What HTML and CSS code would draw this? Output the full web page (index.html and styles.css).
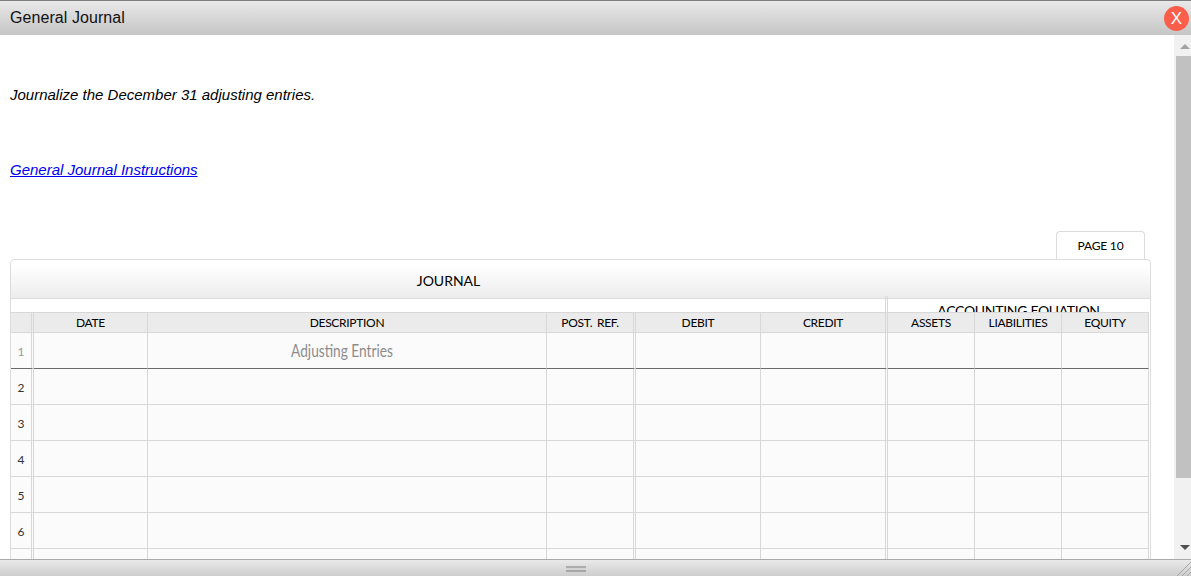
FILE: index.html
```html
<!DOCTYPE html>
<html lang="en">
<head>
    <meta charset="UTF-8">
    <title>General Journal</title>
    <link rel="stylesheet" href="styles.css">
</head>
<body>
    <div class="dialog">
        <div class="titlebar">
            <span class="title">General Journal</span>
            <span class="close">X</span>
        </div>

        <div class="middle">
            <div class="content">
                <p class="intro">Journalize the December 31 adjusting entries.</p>
                <p class="instructions"><a href="#">General Journal Instructions</a></p>

                <div class="page-row">
                    <div class="page-tab">PAGE 10</div>
                </div>

                <div class="panel">
                    <div class="panel-head">
                        <div class="panel-title">JOURNAL</div>
                    </div>
                    <div class="band">
                        <div class="equation">ACCOUNTING EQUATION</div>
                    </div>
                    <table class="journal">
                        <colgroup>
                            <col class="c-num">
                            <col class="c-date">
                            <col class="c-desc">
                            <col class="c-ref">
                            <col class="c-debit">
                            <col class="c-credit">
                            <col class="c-acct">
                            <col class="c-acct">
                            <col class="c-acct">
                        </colgroup>
                        <thead>
                            <tr>
                                <th class="dbl"></th>
                                <th>DATE</th>
                                <th>DESCRIPTION</th>
                                <th class="dbl">POST. REF.</th>
                                <th>DEBIT</th>
                                <th class="dbl">CREDIT</th>
                                <th>ASSETS</th>
                                <th>LIABILITIES</th>
                                <th>EQUITY</th>
                            </tr>
                        </thead>
                        <tbody>
                            <tr class="heading-row">
                                <td class="dbl num num-first">1</td>
                                <td></td>
                                <td class="entry"><span class="entry-text">Adjusting Entries</span></td>
                                <td class="dbl"></td>
                                <td></td>
                                <td class="dbl"></td>
                                <td></td>
                                <td></td>
                                <td></td>
                            </tr>
                            <tr><td class="dbl num">2</td><td></td><td></td><td class="dbl"></td><td></td><td class="dbl"></td><td></td><td></td><td></td></tr>
                            <tr><td class="dbl num">3</td><td></td><td></td><td class="dbl"></td><td></td><td class="dbl"></td><td></td><td></td><td></td></tr>
                            <tr><td class="dbl num">4</td><td></td><td></td><td class="dbl"></td><td></td><td class="dbl"></td><td></td><td></td><td></td></tr>
                            <tr><td class="dbl num">5</td><td></td><td></td><td class="dbl"></td><td></td><td class="dbl"></td><td></td><td></td><td></td></tr>
                            <tr><td class="dbl num">6</td><td></td><td></td><td class="dbl"></td><td></td><td class="dbl"></td><td></td><td></td><td></td></tr>
                            <tr><td class="dbl num"></td><td></td><td></td><td class="dbl"></td><td></td><td class="dbl"></td><td></td><td></td><td></td></tr>
                        </tbody>
                    </table>
                </div>
            </div>

            <div class="scrollbar">
                <span class="arrow-up"></span>
                <div class="thumb"></div>
                <span class="arrow-down"></span>
            </div>
        </div>

        <div class="statusbar">
            <span class="grip"></span>
            <svg class="resize" width="17" height="17" viewBox="0 0 17 17">
                <path d="M17 3 L3 17 M17 8 L8 17 M17 13 L13 17" stroke="#a8a8a8" stroke-width="1" fill="none"/>
            </svg>
        </div>
    </div>
</body>
</html>
```

FILE: styles.css
```css
html, body {
    margin: 0;
    height: 100%;
    overflow: hidden;
}

body {
    font-family: "Liberation Sans", Arial, sans-serif;
    background: #fff;
    color: #000;
}

.dialog {
    display: flex;
    flex-direction: column;
    height: 576px;
    position: relative;
}

.titlebar {
    flex: 0 0 35px;
    box-sizing: border-box;
    display: flex;
    align-items: center;
    justify-content: space-between;
    padding: 0 2px 0 10px;
    border-top: 1px solid #7d7d7d;
    background: linear-gradient(to bottom, #e9e9e9, #c5c5c5);
}

.title {
    font-size: 16px;
    letter-spacing: 0.07px;
    color: #111;
}

.close {
    width: 25px;
    height: 25px;
    border-radius: 50%;
    background: #fb5f4c;
    color: #fff;
    font-size: 17px;
    line-height: 25px;
    text-align: center;
}

.middle {
    flex: 1;
    display: flex;
    min-height: 0;
}

.content {
    flex: 1;
    min-width: 0;
    overflow: hidden;
    padding-left: 10px;
}

.intro {
    margin: 51px 0 0;
    font-size: 15px;
    line-height: 17px;
    font-style: italic;
}

.instructions {
    margin: 58px 0 0;
    font-size: 15px;
    line-height: 17px;
    font-style: italic;
}

.instructions a {
    color: #0000ee;
}

.page-row {
    display: flex;
    justify-content: flex-end;
    width: 1135px;
    margin-top: 53px;
}

.page-tab {
    box-sizing: border-box;
    width: 89px;
    height: 29px;
    border: 1px solid #dcdcdc;
    border-bottom: none;
    border-radius: 4px 4px 0 0;
    font-family: Lato, sans-serif;
    font-size: 12px;
    letter-spacing: -0.2px;
    line-height: 28px;
    text-align: center;
}

.panel {
    box-sizing: border-box;
    width: 1141px;
    margin-top: -1px;
    border: 1px solid #dcdcdc;
    border-bottom: none;
    border-radius: 5px 5px 0 0;
    background: #fff;
    font-family: Lato, sans-serif;
    position: relative;
}

.panel-head {
    height: 38px;
    border-bottom: 1px solid #dcdcdc;
    border-radius: 5px 5px 0 0;
    background: linear-gradient(to bottom, #fff 15%, #ececec);
}

.panel-title {
    width: 875px;
    font-size: 14px;
    line-height: 41px;
    text-align: center;
}

.band {
    display: flex;
    justify-content: flex-end;
    height: 13px;
    padding-right: 1px;
}

.equation {
    box-sizing: border-box;
    width: 264px;
    height: 16px;
    margin-top: -3px;
    border-left: 3px double #d8d8d8;
    overflow: hidden;
    font-size: 14px;
    letter-spacing: -0.3px;
    line-height: 29px;
    text-align: center;
}

.journal {
    table-layout: fixed;
    width: 1138px;
    border-collapse: separate;
    border-spacing: 0;
    background: #fbfbfb;
}

.c-num { width: 23px; }
.c-date { width: 114px; }
.c-desc { width: 399px; }
.c-ref { width: 89px; }
.c-debit { width: 125px; }
.c-credit { width: 127px; }
.c-acct { width: 87px; }

.journal th,
.journal td {
    box-sizing: border-box;
    padding: 0;
    border-right: 1px solid #d8d8d8;
    border-bottom: 1px solid #d8d8d8;
}

.journal th {
    height: 21px;
    border-top: 1px solid #d8d8d8;
    background: #ebebeb;
    font-size: 12px;
    font-weight: 400;
    letter-spacing: -0.3px;
    word-spacing: 2px;
    text-align: center;
}

.journal td {
    height: 36px;
}

.journal .dbl {
    border-right: 3px double #d8d8d8;
}

.journal .heading-row td {
    border-bottom: 1px solid #6b6b6b;
}

.journal .num {
    padding-top: 1px;
    font-size: 12px;
    color: #333;
    text-align: center;
}

.journal .num-first {
    color: #9a9a9a;
}

.journal .entry {
    padding: 0 10px 2px 0;
    font-size: 18px;
    color: #8c8c8c;
    text-align: center;
}

.entry-text {
    display: inline-block;
    transform: scaleX(0.76);
}

.scrollbar {
    flex: 0 0 17px;
    box-sizing: border-box;
    padding-left: 2px;
    background: #f1f1f1;
    position: relative;
}

.thumb {
    margin-top: 21px;
    height: 422px;
    background: #c1c1c1;
}

.arrow-up,
.arrow-down {
    position: absolute;
    left: 6px;
    width: 0;
    height: 0;
    border-left: 5px solid transparent;
    border-right: 5px solid transparent;
}

.arrow-up {
    top: 9px;
    border-bottom: 5px solid #a3a3a3;
}

.arrow-down {
    bottom: 9px;
    border-top: 5px solid #505050;
}

.statusbar {
    flex: 0 0 17px;
    box-sizing: border-box;
    display: flex;
    align-items: center;
    justify-content: center;
    padding-right: 39px;
    border-top: 1px solid #a9a9a9;
    background: linear-gradient(to bottom, #e9e9e9, #cdcdcd);
    position: relative;
}

.grip {
    width: 20px;
    height: 2px;
    border-top: 2px solid #adadad;
    border-bottom: 2px solid #a6a6a6;
    background: #d4d4d4;
    margin-top: 1px;
}

.resize {
    position: absolute;
    right: 0;
    bottom: 0;
}
```
